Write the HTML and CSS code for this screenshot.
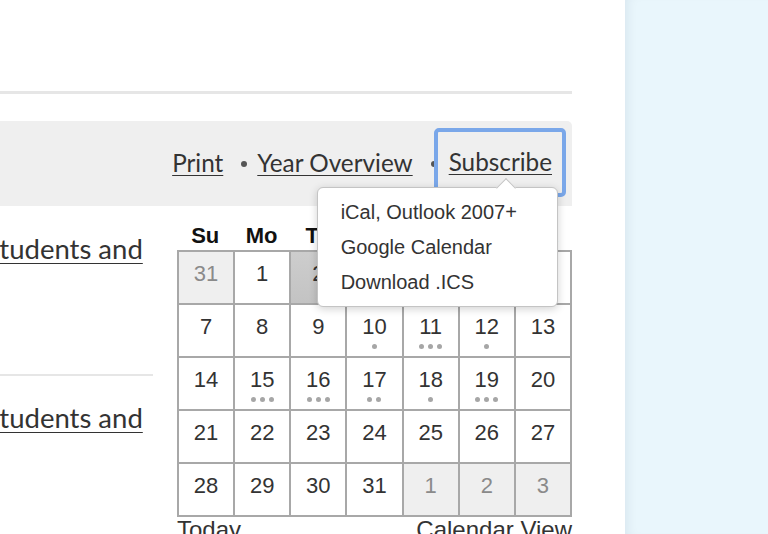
FILE: index.html
```html
<!DOCTYPE html>
<html lang="en">
<head>
<meta charset="utf-8">
<title>Calendar</title>
<link rel="stylesheet" href="styles.css">
</head>
<body>
<div class="layout">
  <main class="main">
    <div class="page">
      <div class="rule"></div>
      <div class="toolbar">
        <a class="tool-link" href="#">Print</a>
        <span class="sep"></span>
        <a class="tool-link" href="#">Year Overview</a>
        <span class="sep sep-last"></span>
        <div class="subscribe">
          <a class="tool-link" href="#">Subscribe</a>
          <div class="dropdown">
            <span class="arrow"></span>
            <a class="dd-item" href="#">iCal, Outlook 2007+</a>
            <a class="dd-item" href="#">Google Calendar</a>
            <a class="dd-item" href="#">Download .ICS</a>
          </div>
        </div>
      </div>
      <div class="body">
        <div class="articles">
          <div class="article">
            <a class="article-title" href="#">Students and</a>
          </div>
          <div class="article article-second">
            <a class="article-title" href="#">Students and</a>
          </div>
        </div>
        <div class="calendar">
          <div class="cal-head">
            <span>Su</span><span>Mo</span><span>Tu</span><span>We</span><span>Th</span><span>Fr</span><span>Sa</span>
          </div>
          <div class="cal-grid">
            <div class="cell other"><span class="num">31</span></div>
            <div class="cell"><span class="num">1</span></div>
            <div class="cell today"><span class="num">2</span></div>
            <div class="cell"><span class="num">3</span></div>
            <div class="cell"><span class="num">4</span></div>
            <div class="cell"><span class="num">5</span></div>
            <div class="cell"><span class="num">6</span></div>

            <div class="cell"><span class="num">7</span></div>
            <div class="cell"><span class="num">8</span></div>
            <div class="cell"><span class="num">9</span></div>
            <div class="cell"><span class="num">10</span><span class="dots"><i></i></span></div>
            <div class="cell"><span class="num">11</span><span class="dots"><i></i><i></i><i></i></span></div>
            <div class="cell"><span class="num">12</span><span class="dots"><i></i></span></div>
            <div class="cell"><span class="num">13</span></div>

            <div class="cell"><span class="num">14</span></div>
            <div class="cell"><span class="num">15</span><span class="dots"><i></i><i></i><i></i></span></div>
            <div class="cell"><span class="num">16</span><span class="dots"><i></i><i></i><i></i></span></div>
            <div class="cell"><span class="num">17</span><span class="dots"><i></i><i></i></span></div>
            <div class="cell"><span class="num">18</span><span class="dots"><i></i></span></div>
            <div class="cell"><span class="num">19</span><span class="dots"><i></i><i></i><i></i></span></div>
            <div class="cell"><span class="num">20</span></div>

            <div class="cell"><span class="num">21</span></div>
            <div class="cell"><span class="num">22</span></div>
            <div class="cell"><span class="num">23</span></div>
            <div class="cell"><span class="num">24</span></div>
            <div class="cell"><span class="num">25</span></div>
            <div class="cell"><span class="num">26</span></div>
            <div class="cell"><span class="num">27</span></div>

            <div class="cell"><span class="num">28</span></div>
            <div class="cell"><span class="num">29</span></div>
            <div class="cell"><span class="num">30</span></div>
            <div class="cell"><span class="num">31</span></div>
            <div class="cell other"><span class="num">1</span></div>
            <div class="cell other"><span class="num">2</span></div>
            <div class="cell other"><span class="num">3</span></div>
          </div>
          <div class="cal-foot">
            <a href="#">Today</a>
            <a href="#">Calendar View</a>
          </div>
        </div>
      </div>
    </div>
  </main>
  <aside class="aside"></aside>
</div>
</body>
</html>
```

FILE: styles.css
```css
html, body {
  margin: 0;
  padding: 0;
  height: 100%;
  overflow: hidden;
  background: #fff;
}

.layout {
  display: flex;
  height: 534px;
}

.main {
  width: 625px;
  flex: none;
  overflow: hidden;
  background: #fff;
}

.page {
  margin-left: -11px;
  width: 583px;
}

.rule {
  margin-top: 91px;
  height: 3px;
  background: #e6e6e6;
}

.toolbar {
  margin-top: 27px;
  height: 85px;
  background: #efefef;
  border-top-right-radius: 5px;
  display: flex;
  align-items: center;
  justify-content: flex-end;
  padding-right: 6px;
  box-sizing: border-box;
  font-family: Lato, "Open Sans", sans-serif;
  font-size: 24.3px;
}

.tool-link {
  color: #333;
  text-decoration: underline;
  text-underline-offset: 3px;
  text-decoration-thickness: 1px;
  margin-top: -2px;
}

.sep {
  width: 6px;
  height: 6px;
  border-radius: 50%;
  background: #555;
  margin: 0 10px 0 18px;
}

.sep-last {
  margin: 0 -3px 0 18px;
}

.subscribe {
  position: relative;
  height: 69px;
  margin-top: -2px;
  box-sizing: border-box;
  border: 4px solid #7aa7e9;
  border-radius: 5px;
  padding: 0 10px 0 11px;
  display: flex;
  align-items: center;
}

.dropdown {
  position: absolute;
  left: -121px;
  top: 55px;
  width: 241px;
  height: 120px;
  box-sizing: border-box;
  background: #fff;
  border: 1px solid #c4c4c4;
  border-radius: 6px;
  box-shadow: 0 2px 8px rgba(0, 0, 0, 0.18);
  padding: 7px 0 0 23px;
  display: flex;
  flex-direction: column;
  z-index: 5;
}

.arrow {
  position: absolute;
  left: 181px;
  top: -7px;
  width: 13px;
  height: 13px;
  background: #fff;
  border-left: 1px solid #c4c4c4;
  border-top: 1px solid #c4c4c4;
  transform: rotate(45deg);
}

.dd-item {
  font-family: "Liberation Sans", Arial, sans-serif;
  font-size: 20px;
  line-height: 35px;
  color: #333;
  text-decoration: none;
  white-space: nowrap;
}

.body {
  display: flex;
}

.articles {
  width: 164px;
  flex: none;
  padding-top: 28px;
}

.article {
  height: 142px;
  box-sizing: border-box;
  border-bottom: 2px solid #e6e6e6;
}

.article-second {
  border-bottom: none;
  padding-top: 27px;
}

.article-title {
  display: block;
  margin-left: -4px;
  font-family: Lato, "Open Sans", sans-serif;
  font-size: 27.5px;
  line-height: 30px;
  color: #333;
  text-decoration: underline;
  text-underline-offset: 4px;
  text-decoration-thickness: 1px;
  white-space: nowrap;
}

.calendar {
  margin-left: 24px;
  width: 395px;
  padding-top: 16px;
  font-family: "Liberation Sans", Arial, sans-serif;
}

.cal-head {
  display: grid;
  grid-template-columns: repeat(7, 1fr);
  height: 28px;
  align-items: center;
  font-weight: bold;
  font-size: 22px;
  color: #111;
  text-align: center;
}

.cal-grid {
  display: grid;
  grid-template-columns: repeat(7, 1fr);
  border-left: 2px solid #a8a8a8;
  border-top: 2px solid #a8a8a8;
}

.cell {
  height: 53px;
  box-sizing: border-box;
  border-right: 2px solid #a8a8a8;
  border-bottom: 2px solid #a8a8a8;
  display: flex;
  flex-direction: column;
  align-items: center;
  padding-top: 8px;
  background: #fff;
}

.cell.other {
  background: #efefef;
}

.cell.other .num {
  color: #8a8a8a;
}

.cell.today {
  background: linear-gradient(to bottom, #cdcdcd, #c3c3c3);
}

.num {
  font-size: 22px;
  line-height: 28px;
  color: #333;
}

.dots {
  display: flex;
  gap: 4px;
  margin-top: 3px;
}

.dots i {
  width: 5px;
  height: 5px;
  border-radius: 50%;
  background: #a6a6a6;
}

.cal-foot {
  display: flex;
  justify-content: space-between;
  font-size: 24px;
  line-height: 26px;
}

.cal-foot a {
  color: #333;
  text-decoration: none;
}

.aside {
  flex: 1;
  background: #e9f6fc;
  box-shadow: inset 10px 0 12px -8px rgba(0, 40, 60, 0.08);
}
```
